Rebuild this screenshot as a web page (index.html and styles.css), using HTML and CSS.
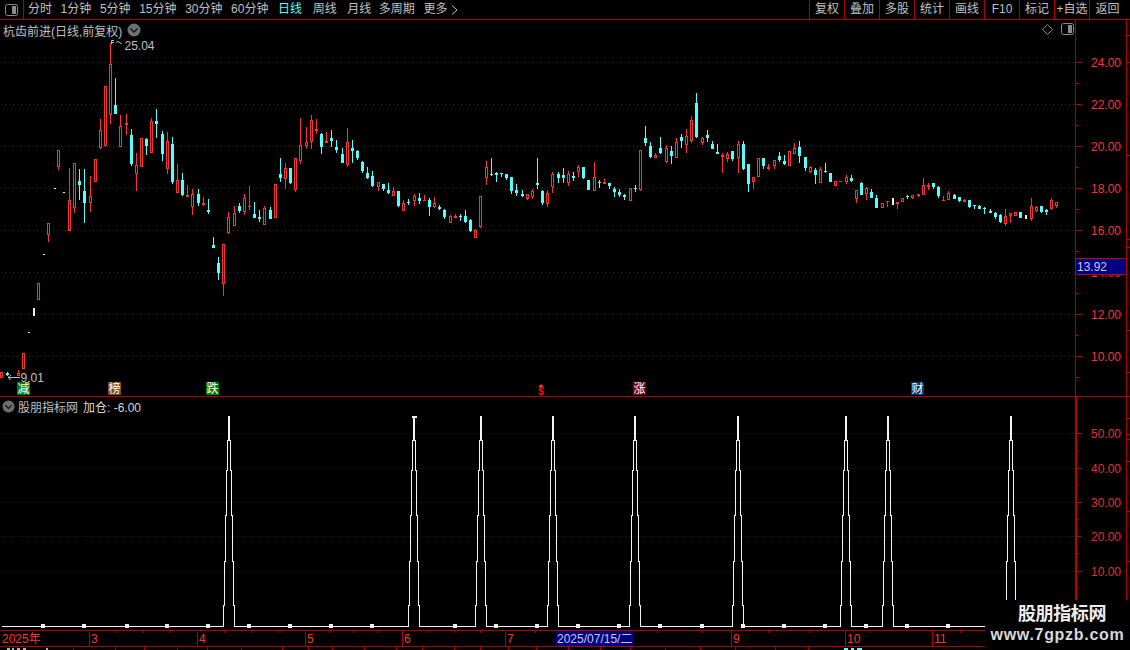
FILE: index.html
```html
<!DOCTYPE html>
<html lang="zh-CN">
<head>
<meta charset="utf-8">
<title>杭齿前进</title>
<link rel="stylesheet" href="styles.css">
</head>
<body>
<div class="app">
  <header class="toolbar">
    <div class="toggle">
      <svg class="toggle-icon" width="13" height="12" viewBox="0 0 13 12"><rect x="0.5" y="0.5" width="12" height="11" rx="2" class="ic-line"/><rect x="7" y="2" width="4" height="8" class="ic-fill"/></svg>
    </div>
    <nav class="periods">
      <span>分时</span><span>1分钟</span><span>5分钟</span><span>15分钟</span><span>30分钟</span><span>60分钟</span>
      <span class="active wide">日线</span><span class="wide">周线</span><span>月线</span><span class="multi">多周期</span>
      <span class="more">更多 <svg width="7" height="10" viewBox="0 0 7 10"><path d="M1 0.5 L6 5 L1 9.5" class="ic-chev"/></svg></span>
    </nav>
    <nav class="actions">
      <span>复权</span><span>叠加</span><span>多股</span><span>统计</span><span>画线</span><span>F10</span><span>标记</span><span>+自选</span><span>返回</span>
    </nav>
  </header>

  <section class="pane pane-top">
    <svg id="main" class="chart" width="1130" height="376" viewBox="0 20 1130 376"></svg>
    <div class="pane-title">
      <span>杭齿前进(日线,前复权)</span>
      <svg width="14" height="14" viewBox="0 0 14 14"><circle cx="7" cy="7" r="6.5" class="ic-disc"/><path d="M3.5 5.5 L7 9 L10.5 5.5" class="ic-down"/></svg>
    </div>
    <div class="pane-tools">
      <svg width="11" height="11" viewBox="0 0 11 11"><path d="M5.5 0.5 L10.5 5.5 L5.5 10.5 L0.5 5.5 Z" class="ic-line"/></svg>
      <svg width="13" height="12" viewBox="0 0 13 12"><rect x="0.5" y="0.5" width="12" height="11" rx="2" class="ic-line"/><rect x="7" y="2" width="4" height="8" class="ic-fill"/></svg>
    </div>
  </section>

  <section class="pane pane-bottom">
    <svg id="sub" class="chart" width="1130" height="233" viewBox="0 397 1130 233"></svg>
    <div class="pane-title sub-title">
      <svg width="13" height="13" viewBox="0 0 14 14"><circle cx="7" cy="7" r="6.5" class="ic-disc"/><path d="M3.5 5.5 L7 9 L10.5 5.5" class="ic-down"/></svg>
      <span>股朋指标网</span><span class="value">加仓: -6.00</span>
    </div>
  </section>

  <footer class="timeline">
    <svg id="time" class="chart" width="1130" height="20" viewBox="0 630 1130 20"></svg>
  </footer>

  <aside class="watermark">
    <div class="wm-name">股朋指标网</div>
    <div class="wm-url">www.7gpzb.com</div>
  </aside>
</div>
<script src="chart.js"></script>
</body>
</html>
```

FILE: styles.css
```css
* { box-sizing: border-box; }
html, body { margin: 0; padding: 0; background: #000; }
body { font-family: "Liberation Sans", "Noto Sans CJK SC", sans-serif; font-size: 12px; color: #c0c0c0; }
.app { position: relative; width: 1130px; height: 650px; overflow: hidden; background: #000; display: flex; flex-direction: column; }

.toolbar { display: flex; height: 20px; flex: none; border-bottom: 1px solid #b00000; line-height: 19px; }
.toggle { width: 24px; flex: none; border-right: 1px solid #b00000; display: flex; align-items: center; justify-content: center; }
.toggle-icon { margin-right: 1px; }
.periods { display: flex; gap: 8.6px; padding-left: 4px; white-space: nowrap; }
.periods .active { color: #54ffff; margin-left: 1px; }
.periods .wide { margin-right: 2px; }
.periods .multi { margin-left: -1px; }
.more { display: flex; align-items: center; gap: 4px; }
.actions { display: flex; margin-left: auto; }
.actions span { width: 35px; text-align: center; border-left: 1px solid #b00000; white-space: nowrap; }
.actions span:last-child { width: 41px; padding-right: 5px; }

.ic-line { fill: none; stroke: #8c8c8c; stroke-width: 1; }
.ic-fill { fill: #8c8c8c; }
.ic-chev { fill: none; stroke: #c0c0c0; stroke-width: 1; }
.ic-disc { fill: #6e6e6e; }
.ic-down { fill: none; stroke: #111; stroke-width: 1.4; }

.pane { position: relative; flex: none; }
.pane-top { height: 377px; border-bottom: 1px solid #b00000; }
.pane-bottom { height: 233px; }
.chart { display: block; }
.pane-title { position: absolute; left: 3px; top: 1px; height: 18px; display: flex; align-items: center; gap: 5px; white-space: nowrap; }
.sub-title { left: 2px; top: 0; gap: 3px; }
.sub-title .value { color: #d8d8d8; margin-left: 2px; }
.pane-tools { position: absolute; left: 1042px; top: 3px; display: flex; align-items: center; gap: 8px; }

.timeline { height: 20px; flex: none; }

.watermark { position: absolute; left: 985px; top: 600px; width: 145px; height: 50px; background: #000; color: #eee; text-align: center; font-weight: 700; }
.wm-name { font-size: 18px; line-height: 22px; margin-top: 3px; padding-left: 9px; letter-spacing: -0.4px; }
.wm-url { font-size: 16px; line-height: 17px; letter-spacing: 0.7px; white-space: nowrap; margin-top: 1px; color: #d8d8d8; }

.grid { fill: none; stroke: #a80000; stroke-width: 1; stroke-dasharray: 1 3; }
.grid-dim { stroke: #8a0000; }
.axis { fill: none; stroke: #b00000; stroke-width: 1; }
.axis-strong { stroke: #c00000; stroke-width: 2; }
.red { fill: #ff3232; }
.cyan { fill: #54ffff; }
.white { fill: #f0f0f0; }
.hollow { fill: #000; }
.label { font-family: "Liberation Sans", sans-serif; font-size: 12px; fill: #ff3232; }
.label-dim { fill: #e03030; }
.note { font-family: "Liberation Sans", sans-serif; font-size: 12px; fill: #c0c0c0; }
.note-line { fill: none; stroke: #c0c0c0; stroke-width: 1; }
.tag-box { fill: #000080; stroke: #c00000; stroke-width: 1; }
.tag-text { font-family: "Liberation Sans", sans-serif; font-size: 12px; fill: #c8c8f0; }
.badge-text { font-family: "Noto Sans CJK SC", sans-serif; font-size: 12px; fill: #fff; text-anchor: middle; }
.dollar { font-family: "Liberation Sans", sans-serif; font-size: 10px; font-weight: 700; fill: #ff1010; text-anchor: middle; }
.b-green { fill: #007c00; }
.b-brown { fill: #8a4a10; }
.b-red { fill: #7c0000; }
.b-navy { fill: #0a3a70; }
.peak { fill: none; stroke: #f4f4f4; stroke-width: 1; }
.bits-white { fill: #b0b0b0; }
.date-box { fill: #000080; }
.date-text { font-family: "Liberation Sans", "Noto Sans CJK SC", sans-serif; font-size: 12px; fill: #c8c8f0; }
.time-label { font-family: "Liberation Sans", "Noto Sans CJK SC", sans-serif; font-size: 12px; fill: #ff3232; }
```

FILE: chart.js
```js
var NS = "http://www.w3.org/2000/svg";

function el(parent, tag, attrs, text) {
  var n = document.createElementNS(NS, tag);
  for (var k in attrs) n.setAttribute(k, attrs[k]);
  if (text !== undefined) n.textContent = text;
  parent.appendChild(n);
  return n;
}

/* x, high, low, bodyTop, bodyBottom, kind: r hollow red, c solid cyan, w white */
var candles = [
[1,372,378,372,378,"r"],[7,372,376,373,375,"c"],[18,370,376,373,376,"r"],[23,353,369,353,369,"r"],
[28,332,333,332,333,"w"],[33,308,316,308,316,"w"],[38,283,300,283,300,"r"],[43,254,255,254,255,"w"],
[48,223,242,223,235,"r"],[54,188,189,188,189,"w"],[58,150,170,150,167,"r"],[63,192,193,192,193,"w"],
[69,168,231,200,231,"r"],[74,163,213,163,208,"r"],[79,169,200,181,185,"c"],[84,169,223,191,203,"c"],
[90,176,212,196,203,"r"],[95,159,182,159,182,"r"],[100,119,149,130,148,"r"],[105,86,146,86,146,"r"],
[110,43,124,64,115,"r"],[115,78,114,105,114,"c"],[120,115,147,126,147,"r"],[126,114,135,123,125,"r"],
[131,129,166,135,164,"c"],[136,153,191,165,174,"r"],[141,138,167,138,167,"r"],[146,138,155,139,146,"c"],
[151,118,153,121,153,"r"],[156,109,138,121,124,"c"],[162,131,161,134,154,"c"],[167,132,174,141,169,"r"],
[172,137,184,144,182,"c"],[177,164,193,180,193,"r"],[182,173,196,180,195,"c"],[187,185,197,195,197,"r"],
[192,189,215,194,207,"r"],[198,189,206,194,203,"c"],[203,197,206,203,205,"r"],[208,199,214,210,212,"c"],
[213,237,248,245,248,"c"],[218,257,280,263,273,"c"],[223,244,296,244,284,"r"],[228,212,234,217,233,"r"],
[234,206,226,213,226,"r"],[239,203,213,206,211,"c"],[244,194,215,198,212,"r"],[249,186,210,206,207,"r"],
[254,202,218,214,218,"c"],[259,210,222,217,219,"c"],[264,206,225,208,225,"r"],[270,207,219,210,219,"c"],
[275,184,218,184,218,"r"],[280,158,182,174,178,"c"],[285,163,189,168,179,"r"],[290,168,184,168,183,"c"],
[295,158,192,158,190,"r"],[300,118,164,145,161,"r"],[306,127,149,142,146,"r"],[311,115,149,120,142,"r"],
[316,119,134,129,131,"r"],[321,133,154,134,147,"c"],[326,132,143,141,143,"r"],[331,130,147,138,141,"c"],
[336,140,153,147,150,"c"],[342,148,163,154,163,"c"],[347,128,167,142,165,"r"],[352,140,163,148,151,"c"],
[357,150,160,151,158,"c"],[362,161,173,162,171,"c"],[367,167,179,173,178,"c"],[372,171,187,176,186,"c"],
[378,182,191,182,187,"r"],[383,184,191,184,189,"c"],[388,183,194,190,193,"c"],[393,187,196,191,196,"r"],
[398,191,207,191,206,"c"],[403,200,211,203,211,"r"],[408,199,205,202,203,"c"],[414,194,206,196,201,"r"],
[419,193,204,198,201,"c"],[424,195,201,200,201,"r"],[429,198,216,200,207,"c"],[434,197,208,203,207,"r"],
[439,205,210,207,209,"c"],[444,209,219,210,217,"c"],[450,215,223,216,223,"r"],[455,214,218,216,218,"r"],
[460,214,221,216,217,"c"],[465,210,223,216,222,"c"],[470,219,232,220,231,"c"],[475,229,238,230,238,"r"],
[480,196,228,196,227,"r"],[486,161,185,167,178,"r"],[491,158,176,174,175,"c"],[496,172,182,173,175,"c"],
[501,173,177,173,174,"c"],[506,174,180,174,178,"c"],[511,177,194,177,191,"c"],[516,184,196,190,193,"c"],
[522,190,197,194,196,"c"],[527,194,200,194,199,"r"],[532,189,199,191,197,"r"],[537,158,189,183,185,"c"],
[542,190,205,191,203,"c"],[547,190,207,193,204,"r"],[552,172,193,174,187,"r"],[558,172,183,174,178,"c"],
[563,168,183,175,178,"c"],[568,171,186,174,183,"r"],[573,172,181,176,178,"c"],[578,165,177,167,172,"r"],
[583,167,179,167,178,"c"],[588,180,190,180,190,"c"],[594,162,191,177,191,"r"],[599,180,188,182,183,"c"],
[604,179,184,182,184,"r"],[609,183,189,183,186,"c"],[614,187,197,189,192,"c"],[619,189,197,192,195,"c"],
[624,194,200,195,197,"c"],[630,188,201,188,201,"r"],[635,185,192,188,189,"c"],[640,150,191,150,190,"r"],
[645,126,146,138,143,"c"],[650,142,158,146,157,"c"],[655,153,158,155,158,"r"],[660,137,154,148,153,"c"],
[666,145,163,148,162,"r"],[671,146,164,151,156,"c"],[676,138,158,142,158,"r"],[681,134,148,137,141,"c"],
[686,129,153,136,145,"r"],[691,116,143,120,141,"r"],[696,93,138,103,137,"c"],[702,137,145,138,143,"r"],
[707,130,142,135,138,"c"],[712,141,149,144,149,"c"],[717,144,154,152,154,"c"],[722,153,173,155,157,"r"],
[727,152,162,154,159,"r"],[732,151,161,151,159,"c"],[738,141,173,144,158,"r"],[743,141,170,144,169,"c"],
[748,164,192,164,184,"c"],[753,177,189,177,182,"r"],[758,158,177,158,177,"r"],[763,158,169,158,166,"c"],
[768,164,170,167,169,"r"],[774,160,169,160,166,"r"],[779,152,162,156,160,"c"],[784,155,165,161,164,"c"],
[789,151,166,151,166,"r"],[794,143,154,148,154,"r"],[799,141,163,147,156,"c"],[805,157,171,157,168,"c"],
[810,166,173,167,172,"r"],[815,168,184,170,175,"c"],[820,167,183,169,183,"r"],[825,163,173,171,172,"c"],
[830,173,182,173,182,"c"],[835,181,186,181,186,"r"],[840,181,182,181,182,"r"],[846,175,184,177,182,"r"],
[851,175,182,178,181,"c"],[856,190,203,190,199,"r"],[861,182,195,183,195,"c"],[866,187,200,188,194,"r"],
[871,189,198,192,198,"c"],[876,195,208,198,208,"c"],[882,203,208,203,208,"r"],[887,201,207,201,202,"r"],
[892,198,205,204,205,"w"],[897,202,209,202,204,"r"],[902,198,202,198,202,"r"],[907,195,199,196,197,"c"],
[912,195,199,195,198,"r"],[918,194,197,194,196,"r"],[923,178,195,185,195,"r"],[928,183,190,185,187,"r"],
[933,183,189,183,187,"c"],[938,186,198,187,196,"c"],[943,196,201,200,201,"r"],[948,191,200,193,200,"r"],
[954,194,199,195,199,"c"],[959,197,202,197,201,"c"],[964,199,202,200,202,"r"],[969,200,208,200,207,"c"],
[974,205,209,205,206,"c"],[979,205,209,206,209,"c"],[984,207,214,208,209,"c"],[990,209,213,211,213,"c"],
[995,212,219,213,217,"c"],[1000,214,223,215,222,"c"],[1005,209,226,216,224,"r"],[1010,213,223,213,216,"r"],
[1015,212,216,212,216,"r"],[1020,212,218,212,218,"c"],[1025,215,219,218,219,"w"],[1031,198,221,206,219,"r"],
[1036,206,212,207,211,"r"],[1041,206,213,206,212,"c"],[1046,209,215,210,212,"c"],[1051,198,210,200,209,"r"],
[1056,202,208,202,206,"r"]
];

var peakCentres = [229, 414, 481, 553, 635, 738, 846, 888, 1011];
var baseDots = [43,84,127,167,208,249,290,331,372,455,496,537,578,619,660,702,743,784,825,866,907,948];
/* half-width of a peak against height: stepped sides narrowing to the tip */
var peakSteps = [[5.5,626.5],[5.5,605],[4.5,605],[4.5,561],[3.5,561],[3.5,515],[2.5,515],[2.5,470],[1.5,470],[1.5,440],[0.5,440],[0.5,416]];

function rectPath(x, y, w, h) {
  return "M" + x + " " + y + "h" + w + "v" + h + "h" + (-w) + "z";
}

function drawMain(svg) {
  var prices = [[24,62],[22,104],[20,146],[18,188],[16,230],[14,272],[12,314],[10,356]];
  prices.forEach(function (p) {
    el(svg, "line", { x1: 1, x2: 1075, y1: p[1] + 0.5, y2: p[1] + 0.5, "class": "grid" });
    el(svg, "line", { x1: 1075, x2: 1082, y1: p[1] + 0.5, y2: p[1] + 0.5, "class": "axis" });
    el(svg, "line", { x1: 1075, x2: 1079, y1: p[1] + 21.5, y2: p[1] + 21.5, "class": "axis" });
    el(svg, "text", { x: 1091, y: p[1] + 4.5, "class": "label" }, p[0].toFixed(2));
  });
  el(svg, "line", { x1: 1075.5, x2: 1075.5, y1: 20, y2: 396, "class": "axis" });
  el(svg, "line", { x1: 1126.5, x2: 1126.5, y1: 20, y2: 396, "class": "axis" });
  [35, 62, 155, 239, 247, 330, 372].forEach(function (y) {
    el(svg, "line", { x1: 1126, x2: 1130, y1: y + 0.5, y2: y + 0.5, "class": "axis" });
  });

  var red = "", cyan = "", white = "", holes = "";
  candles.forEach(function (c) {
    var x = c[0], hi = c[1], lo = c[2], top = c[3], bot = c[4], kind = c[5];
    var wick = rectPath(x, hi, 1, lo - hi);
    if (kind === "r") {
      red += wick + rectPath(x - 1, top, 3, bot - top);
      if (bot - top > 2) holes += rectPath(x, top + 1, 1, bot - top - 2);
    } else if (kind === "c") {
      cyan += wick + rectPath(x - 1, top, 3, bot - top);
    } else {
      white += rectPath(x, hi, 2, Math.max(lo - hi, 1));
    }
  });
  el(svg, "path", { d: red, "class": "red", "shape-rendering": "crispEdges" });
  el(svg, "path", { d: holes, "class": "hollow", "shape-rendering": "crispEdges" });
  el(svg, "path", { d: cyan, "class": "cyan", "shape-rendering": "crispEdges" });
  el(svg, "path", { d: white, "class": "white", "shape-rendering": "crispEdges" });

  el(svg, "path", { d: "M111.5 44V40.5H114M111.5 42.5H114M116 42.5L118 41.5L122 44", "class": "note-line" });
  el(svg, "text", { x: 124.5, y: 50, "class": "note" }, "25.04");
  el(svg, "path", { d: "M8 377.5H20M8 377.5L11 375M8 377.5L11 380", "class": "note-line" });
  el(svg, "text", { x: 20.5, y: 382, "class": "note" }, "9.01");

  [["减",17,"b-green"],["榜",108,"b-brown"],["跌",206,"b-green"],["涨",633,"b-red"],["财",911,"b-navy"]].forEach(function (b) {
    el(svg, "rect", { x: b[1], y: 382, width: 13, height: 13, "class": b[2] });
    el(svg, "text", { x: b[1] + 6.5, y: 393, "class": "badge-text" }, b[0]);
  });
  el(svg, "path", { d: "M541 384L544 387H538Z", "class": "red" });
  el(svg, "text", { x: 541, y: 394.5, "class": "dollar" }, "$");

  el(svg, "rect", { x: 1075.5, y: 258.5, width: 51, height: 16, "class": "tag-box" });
  el(svg, "text", { x: 1077, y: 271, "class": "tag-text" }, "13.92");
}

function peakPoints(c) {
  var pts = peakSteps.map(function (s) { return [c - s[0], s[1]]; });
  peakSteps.slice().reverse().forEach(function (s) { pts.push([c + s[0], s[1]]); });
  return pts;
}

function drawSub(svg) {
  [[50,433],[40,468],[30,502],[20,536],[10,571]].forEach(function (p) {
    el(svg, "line", { x1: 1, x2: 1075, y1: p[1] + 0.5, y2: p[1] + 0.5, "class": "grid grid-dim" });
    el(svg, "line", { x1: 1075, x2: 1082, y1: p[1] + 0.5, y2: p[1] + 0.5, "class": "axis" });
    el(svg, "line", { x1: 1075, x2: 1079, y1: p[1] + 17.5, y2: p[1] + 17.5, "class": "axis" });
    el(svg, "text", { x: 1091, y: p[1] + 4.5, "class": "label label-dim" }, p[0].toFixed(2));
  });
  el(svg, "line", { x1: 1076, x2: 1076, y1: 397, y2: 630, "class": "axis axis-strong" });
  el(svg, "line", { x1: 1126.5, x2: 1126.5, y1: 397, y2: 630, "class": "axis" });
  [418, 434, 439, 461, 511, 561].forEach(function (y) {
    el(svg, "line", { x1: 1126, x2: 1130, y1: y + 0.5, y2: y + 0.5, "class": "axis" });
  });

  var d = "M2 626.5";
  peakCentres.forEach(function (c) {
    peakPoints(c).forEach(function (p) { d += "L" + p[0] + " " + p[1]; });
  });
  d += "L985 626.5";
  el(svg, "path", { d: d, "class": "peak", "shape-rendering": "crispEdges" });
  el(svg, "rect", { x: 412, y: 416, width: 5, height: 2, "class": "white" });
  baseDots.forEach(function (x) {
    el(svg, "rect", { x: x - 2, y: 624, width: 4, height: 4, "class": "white" });
  });
}

function drawTime(svg) {
  el(svg, "line", { x1: 0, x2: 1130, y1: 630.5, y2: 630.5, "class": "axis" });
  el(svg, "line", { x1: 0, x2: 1130, y1: 646.5, y2: 646.5, "class": "axis" });
  [116,143,170,224,251,278,330,354,378,428,454,480,535,610,657,702,768,810,869,960].forEach(function (x) {
    el(svg, "line", { x1: x + 0.5, x2: x + 0.5, y1: 631, y2: 633, "class": "axis" });
  });
  [73,115,144,177,207,241,282,308,332,364,396,422,454,480,508,536,568,600,630,665,700,735,775,808].forEach(function (x) {
    el(svg, "line", { x1: x + 0.5, x2: x + 0.5, y1: 647, y2: 650, "class": "axis" });
  });
  [[89,"3"],[197,"4"],[305,"5"],[402,"6"],[505,"7"],[731,"9"],[845,"10"],[932,"11"]].forEach(function (t) {
    el(svg, "line", { x1: t[0] + 0.5, x2: t[0] + 0.5, y1: 631, y2: 646, "class": "axis" });
    el(svg, "text", { x: t[0] + 2, y: 643, "class": "time-label" }, t[1]);
  });
  el(svg, "text", { x: 2, y: 643, "class": "time-label" }, "2025年");
  el(svg, "rect", { x: 556, y: 631, width: 78, height: 15, "class": "date-box" });
  el(svg, "text", { x: 557, y: 643, "class": "date-text" }, "2025/07/15/二");
  el(svg, "path", { d: "M7 648h3v2h-3zM12 648h2v2h-2zM17 648h3v2h-3zM23 648h3v2h-3zM46 648h2v2h-2z", "class": "bits-white" });
  el(svg, "path", { d: "M844 648h4v2h-4zM851 648h3v2h-3zM857 648h5v2h-5z", "class": "cyan" });
}

drawMain(document.getElementById("main"));
drawSub(document.getElementById("sub"));
drawTime(document.getElementById("time"));
```
